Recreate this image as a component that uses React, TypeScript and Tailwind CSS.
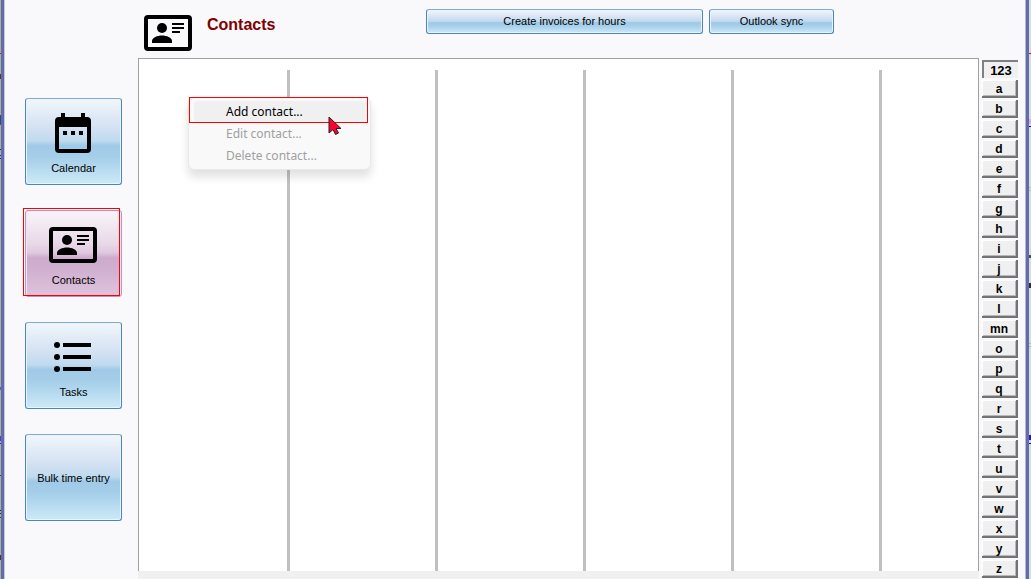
import type { ReactNode } from "react";

const glossyBlue =
  "border border-[#4f83bd] border-t-[#86a9d2] bg-[linear-gradient(to_bottom,#f2f6fb_0%,#cfdff1_38%,#bfdbef_49%,#9fc9e6_55%,#a5cee9_68%,#cceaf7_100%)] shadow-[inset_0_0_0_1px_#e8f5fc]";
const glossyPink =
  "border border-[#bf93bd] bg-[linear-gradient(to_bottom,#f9f4f8_0%,#e8d9e8_38%,#dfc9df_49%,#ceabcd_55%,#d0afcf_68%,#dfc4de_100%)] shadow-[inset_0_0_0_1px_#f3e6f2]";

function CardIcon() {
  return (
    <svg width="48" height="36" viewBox="0 0 48 36" aria-hidden="true">
      <rect x="2" y="2" width="44" height="32" rx="2" fill="none" stroke="#000" strokeWidth="4" />
      <circle cx="18" cy="13" r="5" />
      <path d="M8 28v-2c0-3.300 5.500-5.500 10-5.500s10 2.200 10 5.500v2z" />
      <path d="M28 8h12v2H28zM28 12h12v2H28zM28 16h8v2h-8z" />
    </svg>
  );
}

function CalendarIcon() {
  return (
    <svg width="36" height="40" viewBox="0 0 36 40" aria-hidden="true">
      <path
        fillRule="evenodd"
        d="M6 0h4v4h16V0h4v4h2a4 4 0 0 1 4 4v28a4 4 0 0 1-4 4H4a4 4 0 0 1-4-4V8a4 4 0 0 1 4-4h2zM4 14v22h28V14z"
      />
      <path d="M8 18h4v4H8zM16 18h4v4h-4zM24 18h4v4h-4z" />
    </svg>
  );
}

function ListIcon() {
  return (
    <svg width="38" height="30" viewBox="0 0 38 30" aria-hidden="true">
      <circle cx="3" cy="3" r="3" />
      <circle cx="3" cy="15" r="3" />
      <circle cx="3" cy="27" r="3" />
      <path d="M9 1h28v4H9zM9 13h28v4H9zM9 25h28v4H9z" />
    </svg>
  );
}

function SideButton({ label, icon, active }: { label: string; icon?: ReactNode; active?: boolean }) {
  return (
    <button
      type="button"
      className={`relative flex h-[87px] w-[97px] flex-col items-center rounded-[3px] text-[11px] leading-4 ${
        icon ? "justify-end pb-2" : "justify-center"
      } ${active ? glossyPink : glossyBlue}`}
    >
      {icon && <span className="flex h-10 items-center pr-px">{icon}</span>}
      <span className={icon ? "mt-[7px]" : ""}>{label}</span>
      {active && <span className="absolute -top-[3px] -left-[3px] h-[88px] w-[97px] border border-[#ff0000]" />}
    </button>
  );
}

const letters = ["123", "a", "b", "c", "d", "e", "f", "g", "h", "i", "j", "k", "l", "mn", "o", "p", "q", "r", "s", "t", "u", "v", "w", "x", "y", "z"];

function LetterButton({ label }: { label: string }) {
  const pressed = label === "123";
  return (
    <button
      type="button"
      aria-pressed={pressed}
      className={`flex h-[18px] w-9 shrink-0 items-center justify-center bg-[#f0f0f0] font-bold ${
        pressed
          ? "border-t-2 border-l-2 border-[#808080] pt-0.5 text-[13px]"
          : "border-r-2 border-b-2 border-[#737373] pt-0.5 text-[12px] shadow-[inset_1px_1px_0_#ffffff,inset_-1px_-1px_0_#b8b8b8]"
      }`}
    >
      {label}
    </button>
  );
}

type Mark = [y: number, height: number, color: string];

const leftMarks: Mark[] = [
  [54, 1, "#ff0000"],
  [75, 5, "#6b2a35"],
  [116, 9, "#2b4a80"],
  [125, 1, "#8a4a20"],
  [150, 1, "#2020c0"],
  [156, 1, "#2020c0"],
  [159, 1, "#2020c0"],
  [388, 3, "#4a6ac0"],
  [437, 3, "#7030c0"],
  [440, 2, "#4040e0"],
  [444, 1, "#3030a0"],
  [476, 1, "#3030a0"],
  [511, 1, "#203030"],
  [514, 1, "#203030"],
  [518, 1, "#205040"],
  [556, 5, "#5a3020"],
];

const rightMarks: Mark[] = [
  [54, 1, "#ff0000"],
  [120, 5, "#e0a8d8"],
  [127, 1, "#0000e0"],
  [188, 1, "#b8b4cc"],
  [191, 1, "#b8b4cc"],
  [256, 3, "#305060"],
  [284, 5, "#402040"],
  [344, 1, "#b8b4cc"],
  [347, 1, "#b8b4cc"],
  [436, 5, "#4010b0"],
  [444, 1, "#0000e0"],
];

function WindowMarks({ marks, width }: { marks: Mark[]; width: number }) {
  return (
    <svg width={width} height="579" className="shrink-0" aria-hidden="true">
      {marks.map(([y, height, color]) => (
        <rect key={y} x="0" y={y - 1} width={width} height={height} fill={color} />
      ))}
    </svg>
  );
}

export default function App() {
  return (
    <div className="flex h-screen min-h-[579px] overflow-hidden bg-[#f9f9fc] font-['Liberation_Sans',sans-serif] text-black">
      <div className="flex shrink-0 bg-[#b0aca8]">
        <WindowMarks marks={leftMarks} width={1} />
        <div className="w-1 border-r border-r-[#c3c8e4] bg-[#5f6eaa]" />
      </div>
      <nav className="flex w-[133px] shrink-0 flex-col gap-[25px] pt-[98px] pl-5">
        <SideButton label="Calendar" icon={<CalendarIcon />} />
        <SideButton label="Contacts" icon={<CardIcon />} active />
        <SideButton label="Tasks" icon={<ListIcon />} />
        <SideButton label="Bulk time entry" />
      </nav>
      <main className="flex min-w-0 flex-1 flex-col">
        <header className="flex h-[58px] shrink-0 items-start">
          <div className="mt-[15px] ml-1.5 shrink-0">
            <CardIcon />
          </div>
          <h1 className="mt-4 ml-[15px] w-[219px] shrink-0 text-[16px] leading-[18px] font-bold text-[#800000]">Contacts</h1>
          <div className="mt-[9px] flex gap-1.5 text-[11px]">
            <button type="button" className={`h-[25px] w-[277px] rounded-[3px] ${glossyBlue}`}>
              Create invoices for hours
            </button>
            <button type="button" className={`h-[25px] w-[125px] rounded-[3px] ${glossyBlue}`}>
              Outlook sync
            </button>
          </div>
        </header>
        <section className="relative flex flex-1 overflow-hidden border-x border-t border-[#a0a0a0] bg-white pt-[11px] pl-[3px]">
          {[1, 2, 3, 4, 5].map((column) => (
            <div key={column} className="w-[148px] shrink-0 border-r-[3px] border-[#c0c0c0]" />
          ))}
          <div
            role="menu"
            className="absolute top-[38px] left-[49px] flex w-[183px] flex-col rounded-md border border-[#e8e8e8] bg-[#f9f9f9] px-[5px] pt-[3px] pb-0.5 font-['Noto_Sans','Open_Sans',sans-serif] text-[12px] leading-[22px] shadow-[0_7px_10px_rgba(0,0,0,0.12)]"
          >
            <button type="button" role="menuitem" className="rounded bg-[#f0f0f0] pl-8 text-left">
              Add contact...
            </button>
            <button type="button" role="menuitem" disabled className="pl-8 text-left text-[#a0a0a0]">
              Edit contact...
            </button>
            <button type="button" role="menuitem" disabled className="pl-8 text-left text-[#a0a0a0]">
              Delete contact...
            </button>
            <span className="absolute -top-px left-0 h-[26px] w-[179px] border border-[#ff0000]" />
            <svg className="absolute top-[18px] left-[139px]" width="15" height="20" viewBox="0 0 15 20" aria-hidden="true">
              <path d="M1 1v16l4-3.500 2.500 5 3-1.500-2.500-4.500h5z" fill="#ff0033" stroke="#222" />
            </svg>
          </div>
        </section>
        <div className="h-2 shrink-0 bg-[#f0f0f0]" />
      </main>
      <aside className="flex w-[46px] shrink-0 flex-col gap-0.5 overflow-hidden pt-[60px] pl-[3px]">
        {letters.map((letter) => (
          <LetterButton key={letter} label={letter} />
        ))}
      </aside>
      <div className="flex shrink-0 bg-[#dcdadf]">
        <div className="w-1 border-l border-l-[#b4b9dc] bg-[#5f6eaa]" />
        <WindowMarks marks={rightMarks} width={2} />
      </div>
    </div>
  );
}
